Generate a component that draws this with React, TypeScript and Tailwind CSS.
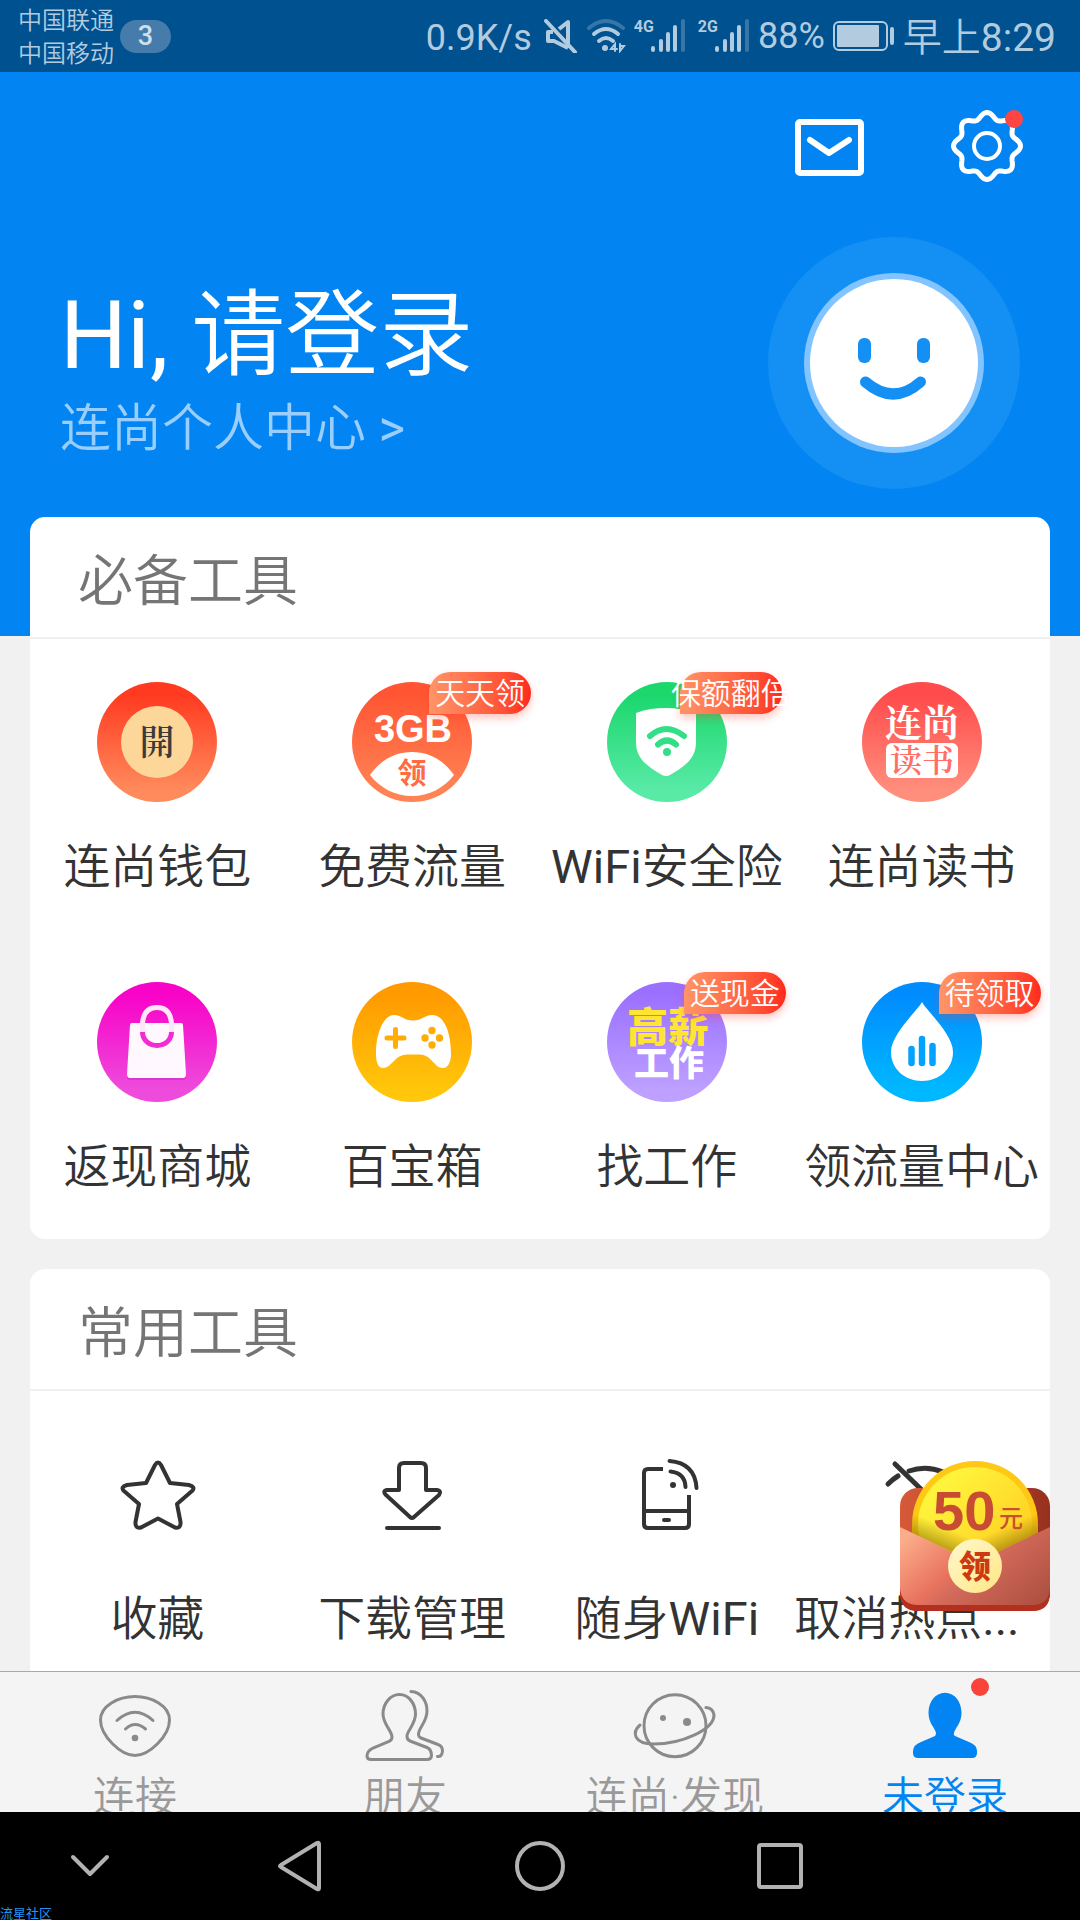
import type { ReactNode } from "react"
import clsx from "clsx"

const sans = "font-['Roboto','Noto_Sans_CJK_SC',sans-serif]"

/* ---------- status bar ---------- */

function Signal({ label }: { label: string }) {
  return (
    <span className="flex items-start">
      <span className="text-base leading-4 font-bold">{label}</span>
      <svg className="-ml-1" width="36" height="34" viewBox="0 0 36 34" fill="none" stroke="currentColor" strokeWidth="4" strokeLinecap="round">
        <path d="M3 29v2M11 22v9M18 15v16M25 8v23" />
        <path d="M33 2v29" opacity="0.3" />
      </svg>
    </span>
  )
}

function StatusBar() {
  return (
    <header className="flex h-[72px] shrink-0 items-center justify-between bg-[#00518f] pr-6 pl-[18px] text-[#b2cbdf]">
      <div className="flex items-center gap-1.5">
        <div className="pt-1 text-2xl leading-[33px] font-[350]">
          <p>中国联通</p>
          <p>中国移动</p>
        </div>
        <span className="flex h-[33px] w-[51px] items-center justify-center rounded-full bg-[#457cab] text-[27px] font-medium text-[#d0dfec]">
          3
        </span>
      </div>

      <div className="flex items-center gap-2">
        <span className="pt-1 text-4xl">0.9K/s</span>
        <svg className="ml-1" width="34" height="34" viewBox="0 0 34 34" fill="none" stroke="currentColor" strokeWidth="4" strokeLinejoin="round">
          <path d="M24 18V3L15 10M24 29L10 22H4V13h5M24 18v11" />
          <path d="M2 2l29 31" strokeLinecap="round" />
        </svg>
        <svg width="40" height="34" viewBox="0 0 40 34" fill="none" stroke="currentColor" strokeWidth="4" strokeLinecap="round">
          <path d="M3 9Q20-5 37 9" opacity="0.3" />
          <path d="M8 15q12-10 24 0M13 22q7-6 14 0" />
          <circle cx="19" cy="29" r="3" fill="currentColor" stroke="none" />
          <path d="M29 32v-7l-4 5h6M34 25v7l4-5h-4" strokeWidth="2" />
        </svg>
        <div className="flex gap-3">
          <Signal label="4G" />
          <Signal label="2G" />
        </div>
        <span className="text-4xl">88%</span>
        <svg width="62" height="30" viewBox="0 0 62 30" fill="none" stroke="currentColor">
          <rect x="1" y="1" width="53" height="28" rx="5" strokeWidth="2" />
          <rect x="4" y="4" width="42" height="22" rx="1" fill="currentColor" stroke="none" />
          <path d="M59 8v14" strokeWidth="4" strokeLinecap="round" />
        </svg>
        <time className="pt-1 text-[39px]">
          <span className="font-[350]">早上</span>8:29
        </time>
      </div>
    </header>
  )
}

/* ---------- profile header ---------- */

// Eight-lobed outline of the settings gear
const gearPoints = Array.from({ length: 144 }, (_, i) => {
  const a = (i / 144) * Math.PI * 2
  const r = 30.5 + 3 * Math.cos(a * 8)
  return `${(36 + r * Math.cos(a)).toFixed(2)},${(36 + r * Math.sin(a)).toFixed(2)}`
}).join(" ")

function ProfileHeader() {
  return (
    <section className="bg-[#0285f3] pt-[38px] pb-[147px] text-white">
      <div className="flex justify-end gap-[85px] pr-[57px]">
        <button type="button" aria-label="消息">
          <svg width="72" height="72" viewBox="0 0 72 72" fill="none" stroke="currentColor" strokeLinecap="round" strokeLinejoin="round">
            <rect x="4" y="12" width="63" height="51" rx="2" strokeWidth="6" />
            <path d="M16 30l19 13 20-13" strokeWidth="6" />
          </svg>
        </button>
        <button type="button" aria-label="设置" className="relative">
          <svg width="72" height="72" viewBox="0 0 72 72" fill="none" stroke="currentColor">
            <polygon points={gearPoints} strokeWidth="5" strokeLinejoin="round" />
            <circle cx="36" cy="36" r="13" strokeWidth="4" />
          </svg>
          <span className="absolute top-0 right-0 size-[18px] rounded-full bg-[#ff4444]" />
        </button>
      </div>

      <div className="mt-[55px] flex items-start justify-between px-[60px]">
        <a href="#login" className="block pt-11">
          <h1 className="text-[94px] leading-[110px] font-[350]">
            <span className="font-normal">Hi,</span> 请登录
          </h1>
          <p className="mt-2 text-[51px] leading-[60px] font-[350] text-[#99ceff]">
            连尚个人中心 <span className="font-normal">&gt;</span>
          </p>
        </a>
        <svg width="252" height="252" viewBox="0 0 252 252" fill="none">
          <circle cx="126" cy="126" r="126" fill="#148ff3" />
          <circle cx="126" cy="126" r="90" fill="#82c4ff" />
          <circle cx="126" cy="126" r="84" fill="#fff" />
          <rect x="90" y="101" width="13" height="25" rx="6" fill="#148ff3" />
          <rect x="149" y="101" width="13" height="25" rx="6" fill="#148ff3" />
          <path d="M97.500 145q28 24 55 0" stroke="#148ff3" strokeWidth="11" strokeLinecap="round" />
        </svg>
      </div>
    </section>
  )
}

/* ---------- round tool icons ---------- */

function Disc({ id, from, to, children }: { id: string; from: string; to: string; children: ReactNode }) {
  return (
    <svg width="120" height="120" viewBox="0 0 120 120" className="shrink-0">
      <defs>
        <linearGradient id={id} x1="0" y1="0" x2="0" y2="1">
          <stop offset="0.1" stopColor={from} />
          <stop offset="0.9" stopColor={to} />
        </linearGradient>
      </defs>
      <circle cx="60" cy="60" r="60" fill={`url(#${id})`} />
      {children}
    </svg>
  )
}

const serif = "font-['Noto_Serif_CJK_SC','Noto_Sans_CJK_SC',serif]"

const walletIcon = (
  <Disc id="wallet" from="#ff3a20" to="#ff8a5c">
    <circle cx="60" cy="60" r="36" fill="#fdd799" />
    <text x="60" y="73" textAnchor="middle" fontSize="35" fontWeight="600" fill="#3b3b3b" className={serif}>開</text>
  </Disc>
)

const trafficIcon = (
  <Disc id="traffic" from="#ff5533" to="#ff8355">
    <text x="61" y="60" textAnchor="middle" fontSize="38" fontWeight="700" fill="#fff" className="font-['Liberation_Sans',sans-serif]">3GB</text>
    <path d="M18 93C30 76 45 70 60 70S90 76 102 93C92 106 77 114 60 114S28 106 18 93Z" fill="#fff" />
    <text x="60" y="102" textAnchor="middle" fontSize="29" fontWeight="700" fill="#ff6b42">领</text>
  </Disc>
)

const shieldIcon = (
  <Disc id="shield" from="#1bd76c" to="#58eaa6">
    <path d="M29 31C39 27 49 26 59 26C70 26 80 28 89 31V60C89 78 76 85 63 93Q59 95 55 93C42 85 29 78 29 60Z" fill="#fff" />
    <path d="M43 54q16-14 34 0M51 62.500q9-8 18 0" fill="none" stroke="#33df86" strokeWidth="6" strokeLinecap="round" />
    <circle cx="60" cy="70" r="4" fill="#33df86" />
  </Disc>
)

const readingIcon = (
  <Disc id="reading" from="#ff4b4b" to="#ff8e7c">
    <text x="60" y="55" textAnchor="middle" fontSize="37" fontWeight="700" fill="#fff" className={serif}>连尚</text>
    <rect x="24" y="61" width="72" height="35" rx="6" fill="#fff" />
    <text x="60" y="90" textAnchor="middle" fontSize="32" fontWeight="600" fill="#ff6f66" className={serif}>读书</text>
  </Disc>
)

const mallIcon = (
  <Disc id="mall" from="#f803c8" to="#ee4bdc">
    <path d="M36 43H85L89 95Q89 98 86 98H33Q30 98 30 95Z" fill="#c22bd0" opacity="0.5" />
    <path d="M35 41H84Q86 41 86 43L89 92Q89 96 86 96H33Q30 96 30 92L33 43Q33 41 35 41Z" fill="#fff8ff" />
    <path d="M45.500 50V41Q47 25.500 60 25.500T74.500 41V50" fill="none" stroke="#ffe6fa" strokeWidth="5" />
    <path d="M45.500 50C45.500 58 52 63.500 60 63.500S74.500 58 74.500 50" fill="none" stroke="#f32bd3" strokeWidth="5" />
  </Disc>
)

const gameIcon = (
  <Disc id="game" from="#ff9a00" to="#ffc60b">
    <path d="M42 33C50 33 51 38.500 61 38.500S72 33 80 33C93 33 99 52 99 72C99 80 96 86 91 86C82 86 80 73 68 72.500H55C42 73 40 86 31 86C26 86 24 80 24 72C24 50 32 33 42 33Z" fill="#fff" />
    <path d="M43.500 47.500v17M35 56h17" stroke="#ffad05" strokeWidth="5" strokeLinecap="round" />
    <g fill="#ffad05">
      <circle cx="80" cy="48.500" r="3.700" />
      <circle cx="73" cy="56" r="3.700" />
      <circle cx="87.500" cy="56" r="3.700" />
      <circle cx="80" cy="63" r="3.700" />
    </g>
  </Disc>
)

const jobIcon = (
  <Disc id="job" from="#9b70ff" to="#bda0ff">
    <text x="61" y="60" textAnchor="middle" fontSize="41" fontWeight="900" fill="#ffe532">高薪</text>
    <text x="62" y="94" textAnchor="middle" fontSize="35" fontWeight="900" fill="#fff">工作</text>
  </Disc>
)

const dataIcon = (
  <Disc id="data" from="#008cff" to="#00b8ff">
    <path d="M60 20C64 28 91 52 91 70C91 87 77 99 60 99S29 87 29 70C29 52 56 28 60 20Z" fill="#fff" />
    <path d="M49.500 67v14M60 57v24M70.500 64v17" stroke="#04a2ff" strokeWidth="6.500" strokeLinecap="round" />
  </Disc>
)

/* ---------- line icons ---------- */

function LineIcon({ children }: { children: ReactNode }) {
  return (
    <svg width="72" height="72" viewBox="0 0 72 72" fill="none" stroke="#333" strokeWidth="4" strokeLinecap="round" strokeLinejoin="round" className="shrink-0 overflow-visible">
      {children}
    </svg>
  )
}

const starIcon = (
  <LineIcon>
    <path d="M34 6Q37 1 40 6L49 24L68 26Q75 28 71 32L56 45L59.500 63Q60 70 54 68.500L37 59.500L20 68.500Q14 70 14.500 63L18 45L3 32Q-1 28 6 26L25 24Z" />
  </LineIcon>
)

const downloadIcon = (
  <LineIcon>
    <path d="M23 31V9Q23 4 28 4H45Q50 4 50 9V31H61Q66 32 63 36L38 58Q36 60 34 58L10 36Q6 32 11 31Z" />
    <path d="M11 69H63" />
  </LineIcon>
)

const hotspotIcon = (
  <LineIcon>
    <path d="M32 10H17Q13 10 13 14V65Q13 69 17 69H54Q58 69 58 65V36M13 52H58" strokeLinecap="butt" />
    <path d="M33 61H38M39.500 12.500Q54 14 54.500 28M38.500 2Q64 4 65.500 29" />
    <circle cx="42" cy="26" r="3" fill="#333" stroke="none" />
  </LineIcon>
)

const wifiOffIcon = (
  <LineIcon>
    <path d="M9 5L40 35" strokeWidth="5" />
    <path d="M2 25Q7 20 12 17M23 12Q40 6 57 13" strokeWidth="5" />
  </LineIcon>
)

/* ---------- tool cards ---------- */

type Tool = { name: string; icon: ReactNode; tag?: string; cut?: boolean }

const essentials: Tool[] = [
  { name: "连尚钱包", icon: walletIcon },
  { name: "免费流量", icon: trafficIcon, tag: "天天领" },
  { name: "WiFi安全险", icon: shieldIcon, tag: "保额翻倍" },
  { name: "连尚读书", icon: readingIcon },
  { name: "返现商城", icon: mallIcon },
  { name: "百宝箱", icon: gameIcon },
  { name: "找工作", icon: jobIcon, tag: "送现金" },
  { name: "领流量中心", icon: dataIcon, tag: "待领取" },
]

const common: Tool[] = [
  { name: "收藏", icon: starIcon },
  { name: "下载管理", icon: downloadIcon },
  { name: "随身WiFi", icon: hotspotIcon },
  { name: "取消热点...", icon: wifiOffIcon, cut: true },
]

function Tag({ text }: { text: string }) {
  const long = text.length > 3
  return (
    <span
      className={clsx(
        "absolute top-[33px] left-1/2 flex h-[42px] w-[102px] items-center justify-center rounded-full rounded-bl-none pt-0.5",
        "bg-gradient-to-r from-[#ff9468] to-[#ff281d] text-3xl font-[350] whitespace-nowrap text-white",
        "shadow-[0_4px_8px_rgba(255,60,40,0.3)]",
        long ? "ml-[13px]" : "ml-[17px]",
      )}
    >
      <span className={clsx("shrink-0", long && "[clip-path:inset(0_4px_0_0)]")}>{text}</span>
    </span>
  )
}

// The CJK part of a label is set lighter than the Latin part
function Label({ text }: { text: string }) {
  return text.split(/(WiFi|\.\.\.)/).map((part, i) => (
    <span key={i} className={i % 2 ? "font-normal" : "font-[350]"}>
      {part}
    </span>
  ))
}

function ToolCard({ title, tools, className, cell }: { title: string; tools: Tool[]; className?: string; cell: string }) {
  return (
    <section className={clsx("relative mx-[30px] rounded-[15px] bg-white", className)}>
      <h2 className="flex h-[122px] items-center border-b-2 border-[#f0f0f0] px-12 pt-2 text-[55px] font-[350] text-[#757575]">
        {title}
      </h2>
      <ul className="grid grid-cols-4 pr-px">
        {tools.map((tool) => (
          <li key={tool.name}>
            <a href="#tool" className={clsx("relative flex h-[300px] flex-col items-center text-[47px] leading-[56px] text-[#333]", cell)}>
              {tool.icon}
              {tool.tag && <Tag text={tool.tag} />}
              <span className={clsx("whitespace-nowrap", tool.cut && "self-start")}>
                <Label text={tool.name} />
              </span>
            </a>
          </li>
        ))}
      </ul>
    </section>
  )
}

function Coupon() {
  return (
    <button type="button" aria-label="领50元" className="absolute right-[30px] bottom-[60px]">
      <svg width="150" height="150" viewBox="0 0 150 150">
        <defs>
          <linearGradient id="back">
            <stop offset="0" stopColor="#d65a38" />
            <stop offset="1" stopColor="#97301f" />
          </linearGradient>
          <linearGradient id="coin" x1="0" y1="0" x2="1" y2="1">
            <stop offset="0.2" stopColor="#fff33c" />
            <stop offset="1" stopColor="#ffc21a" />
          </linearGradient>
          {/* shadow of the flap, one half for each side of the fold */}
          <linearGradient id="shadeLeft" gradientUnits="userSpaceOnUse" x1="50" y1="68" x2="42" y2="86">
            <stop offset="0" stopColor="#7a6200" stopOpacity="0" />
            <stop offset="1" stopColor="#7a6200" stopOpacity="0.5" />
          </linearGradient>
          <linearGradient id="shadeRight" gradientUnits="userSpaceOnUse" x1="100" y1="68" x2="108" y2="86">
            <stop offset="0" stopColor="#7a6200" stopOpacity="0" />
            <stop offset="1" stopColor="#7a6200" stopOpacity="0.5" />
          </linearGradient>
          <linearGradient id="front" x1="0" y1="0.2" x2="1" y2="0.8">
            <stop offset="0" stopColor="#fbad8b" />
            <stop offset="0.4" stopColor="#e9745f" />
            <stop offset="0.55" stopColor="#d2695a" />
            <stop offset="1" stopColor="#b05242" />
          </linearGradient>
          <linearGradient id="seal" x1="0" y1="0" x2="1" y2="1">
            <stop offset="0" stopColor="#fff8d0" />
            <stop offset="1" stopColor="#ffe683" />
          </linearGradient>
        </defs>
        <rect y="27" width="150" height="123" rx="18" fill="url(#back)" />
        <path d="M12 72V63a63 63 0 0 1 126 0V72L75 102Z" fill="#fec815" />
        <circle cx="75" cy="63" r="57" fill="url(#coin)" />
        <path d="M12 52L75 80V102L12 72Z" fill="url(#shadeLeft)" />
        <path d="M138 52L75 80V102L138 72Z" fill="url(#shadeRight)" />
        <path d="M0 120V132Q0 150 18 150H132Q150 150 150 132V120Z" fill="#b3301f" />
        <path d="M0 66L75 102L150 66V128Q148 144 132 144H18Q2 144 0 128Z" fill="url(#front)" />
        <circle cx="75" cy="105" r="27" fill="url(#seal)" />
        <text x="33" y="69" fontSize="56" fontWeight="700" fill="#c84b33" className="font-['Liberation_Sans',sans-serif]">50</text>
        <text x="99" y="66" fontSize="24" fontWeight="500" fill="#c8502f">元</text>
        <text x="75" y="117" textAnchor="middle" fontSize="32" fontWeight="900" fill="#cb3a12">领</text>
      </svg>
    </button>
  )
}

/* ---------- bottom bars ---------- */

const tabs = [
  {
    name: "连接",
    icon: (
      <>
        <path d="M40 6.500C57 6.500 74.500 16 74.500 30C74.500 46 54 65.500 40 65.500S5.500 46 5.500 30C5.500 16 23 6.500 40 6.500Z" />
        <path d="M22 30.500Q40 14 58 30.500M30.500 39Q40 30 50.500 39" />
        <circle cx="40" cy="48" r="3.300" fill="currentColor" stroke="none" />
      </>
    ),
  },
  {
    name: "朋友",
    icon: (
      <>
        <path d="M34.500 4.500C25 4.500 18 14 18 24C18 34 27 41 27 47Q27 50 24 51.500L8 58Q2 61 2 66Q2 69.500 6 69.500H62Q66.500 69.500 66.500 65Q66 59 62 57.500L45 51Q42 50 42 46C42 41 50.500 34 50.500 24C50.500 14 44 4.500 34.500 4.500Z" />
        <path d="M46 1.500C57 2 62 12 62 21C62 32 53.500 38 53.500 44Q53.500 47 56 48L73 54.500Q77.500 56 77.500 61Q77 67 72.500 66.500" />
      </>
    ),
  },
  {
    name: "连尚·发现",
    icon: (
      <>
        <circle cx="40" cy="35.700" r="31" />
        <path d="M5 35C-3 42-2 54 19 54C46 54 79 40 79 25Q78 18 71 17.500" />
        <circle cx="28" cy="28" r="3" fill="currentColor" stroke="none" />
        <circle cx="52" cy="32" r="4" fill="currentColor" stroke="none" />
      </>
    ),
  },
  {
    name: "未登录",
    active: true,
    icon: (
      <path
        d="M40 2.700C30 2.700 23.500 12 23.500 23C23.500 33 30 38 31 43Q31 45 30 46L16 52Q8 55 8 61V63Q8 68 13 68H67Q72 68 72 63V61Q72 55 64 52L50 46Q48 45 49 43C50 38 56.500 33 56.500 23C56.500 12 50 2.700 40 2.700Z"
        fill="currentColor"
        stroke="none"
      />
    ),
  },
]

function TabBar() {
  return (
    <nav className="grid h-[141px] shrink-0 grid-cols-4 overflow-hidden border-t border-[#a9a9a9] bg-[#f4f4f4]">
      {tabs.map((tab) => (
        <a
          key={tab.name}
          href="#tab"
          className={clsx("flex flex-col items-center pt-[18px]", tab.active ? "text-[#0285f3]" : "text-[#8a8a8a]")}
        >
          <span className="relative">
            <svg width="80" height="72" viewBox="0 0 80 72" fill="none" stroke="currentColor" strokeWidth="3" strokeLinecap="round" className="overflow-visible">
              {tab.icon}
            </svg>
            {tab.active && <span className="absolute -top-3 -right-1 size-[18px] rounded-full bg-[#fa4339]" />}
          </span>
          <span className={clsx("mt-3 shrink-0 text-[42px] leading-[48px] font-[350]", !tab.active && "text-[#999]")}>
            {tab.name}
          </span>
        </a>
      ))}
    </nav>
  )
}

function NavButton({ label, children }: { label: string; children: ReactNode }) {
  return (
    <button type="button" aria-label={label} className="flex items-center justify-center">
      <svg width="52" height="52" viewBox="0 0 52 52" fill="none" stroke="#b2b2b2" strokeWidth="4" strokeLinecap="round" strokeLinejoin="round">
        {children}
      </svg>
    </button>
  )
}

function NavBar() {
  return (
    <footer className="relative grid h-[108px] shrink-0 grid-cols-[3fr_4fr_4fr_4fr_3fr] bg-black">
      <NavButton label="收起">
        <path d="M9 17L26 34L43 17" />
      </NavButton>
      <NavButton label="返回">
        <path d="M43 3Q45 2 45 4V48Q45 50 43 49L7 27Q5 26 7 25Z" />
      </NavButton>
      <NavButton label="主页">
        <circle cx="26" cy="26" r="23" />
      </NavButton>
      <NavButton label="最近">
        <rect x="5" y="5" width="42" height="42" rx="2" />
      </NavButton>
      <span className="absolute bottom-0 left-0 text-[13px] leading-3 text-[#2196f3]">流星社区</span>
    </footer>
  )
}

export default function App() {
  return (
    <div lang="zh-CN" className={clsx("flex h-screen flex-col overflow-hidden bg-[#f1f1f1]", sans)}>
      <StatusBar />
      <main className="relative min-h-0 flex-1">
        <div className="h-full overflow-y-auto [scrollbar-width:none]">
          <ProfileHeader />
          <ToolCard title="必备工具" tools={essentials} className="-mt-[119px]" cell="gap-[37px] pt-[43px]" />
          <ToolCard title="常用工具" tools={common} className="mt-[30px]" cell="gap-[60px] pt-[68px]" />
        </div>
        <Coupon />
      </main>
      <TabBar />
      <NavBar />
    </div>
  )
}
